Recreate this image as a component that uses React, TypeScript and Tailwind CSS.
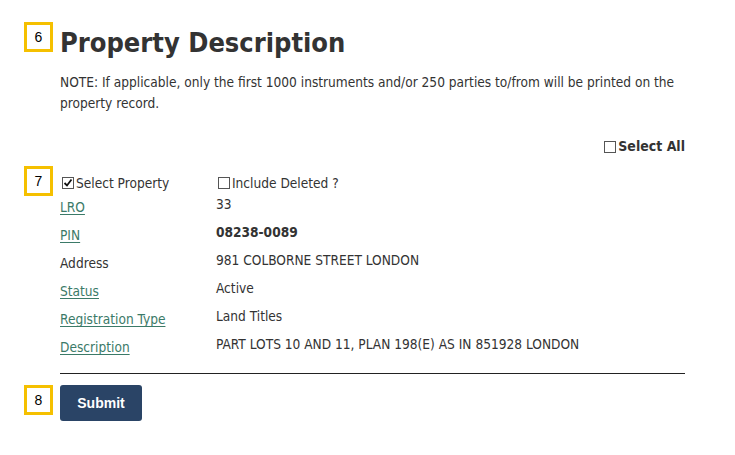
import React from "react";

const font = { fontFamily: '"DejaVu Sans Condensed", "DejaVu Sans", sans-serif' };

function Box({ n }: { n: string }) {
  return (
    <div
      className="w-[29px] h-[30px] border-[3px] border-[#f5c000] bg-white flex items-center justify-center text-[14px] text-black"
      style={{ fontFamily: '"Liberation Sans", Arial, sans-serif' }}
    >
      {n}
    </div>
  );
}

function Check({ checked }: { checked?: boolean }) {
  return (
    <span className="inline-flex w-[12px] h-[12px] border border-[#555] bg-white items-center justify-center mr-[2px]">
      {checked && (
        <svg width="10" height="10" viewBox="0 0 10 10">
          <path d="M1.5 5 L4 7.5 L8.5 1.5" fill="none" stroke="#111" strokeWidth="1.8" />
        </svg>
      )}
    </span>
  );
}

const linkCls = "text-[#3b7a68] underline underline-offset-2 decoration-1";

export default function App() {
  const rows: { label: string; link: boolean; value: string; bold?: boolean }[] = [
    { label: "LRO", link: true, value: "33" },
    { label: "PIN", link: true, value: "08238-0089", bold: true },
    { label: "Address", link: false, value: "981 COLBORNE STREET LONDON" },
    { label: "Status", link: true, value: "Active" },
    { label: "Registration Type", link: true, value: "Land Titles" },
    { label: "Description", link: true, value: "PART LOTS 10 AND 11, PLAN 198(E) AS IN 851928 LONDON" },
  ];
  return (
    <div className="w-[735px] h-[455px] bg-white text-[#333] text-[13.6px]" style={font}>
      <div className="pl-[24px] pt-[22px]">
        <div className="flex">
          <div className="w-[36px] shrink-0">
            <Box n="6" />
          </div>
          <h1 className="text-[27px] font-bold leading-[34px] text-[#333] mt-[4px]">
            Property Description
          </h1>
        </div>
        <div className="pl-[36px] w-[661px] mt-[12px] leading-[21px]">
          <p>
            NOTE: If applicable, only the first 1000 instruments and/or 250 parties to/from will be printed on the
            property record.
          </p>
          <div className="flex justify-end items-center mt-[22px] font-bold text-[14px]">
            <Check />
            <span>Select All</span>
          </div>
        </div>
        <div className="flex mt-[9px]">
          <div className="w-[36px] shrink-0">
            <Box n="7" />
          </div>
          <div className="w-[625px]">
            <div className="flex items-center pt-[7px]">
              <div className="w-[156px] flex items-center pl-[2px]">
                <Check checked />
                <span>Select Property</span>
              </div>
              <div className="flex items-center pl-[2px]">
                <Check />
                <span>Include Deleted ?</span>
              </div>
            </div>
            {rows.map((r, i) => (
              <div key={i} className={"flex h-[28px] " + (i === 0 ? "-mt-[2px]" : "")}>
                <div className="w-[156px] pt-[6px]">
                  {r.link ? <span className={linkCls}>{r.label}</span> : <span>{r.label}</span>}
                </div>
                <div className={"pt-[3px] " + (r.bold ? "font-bold" : "")}>{r.value}</div>
              </div>
            ))}
            <div className="border-t border-[#222] mt-[14px]" />
          </div>
        </div>
        <div className="flex mt-[11px]">
          <div className="w-[36px] shrink-0">
            <Box n="8" />
          </div>
          <button
            className="w-[82px] h-[36px] rounded-[3px] bg-[#2a4466] text-white font-bold text-[14px]"
            style={{ fontFamily: '"Liberation Sans", Arial, sans-serif' }}
          >
            Submit
          </button>
        </div>
      </div>
    </div>
  );
}
